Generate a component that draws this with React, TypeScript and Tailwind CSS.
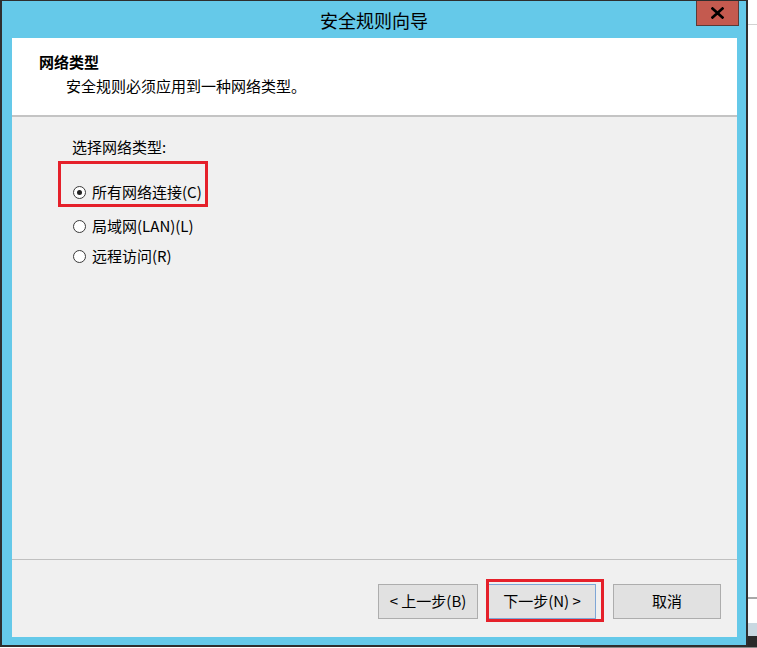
import React from 'react'

const font = "font-['Noto_Sans_CJK_SC','Microsoft_YaHei',sans-serif]"

function Radio({ label, checked }: { label: string; checked?: boolean }) {
  return (
    <div className="flex items-center h-[20px] w-fit">
      <span className="w-[13px] h-[13px] rounded-full border border-[#3a3a3a] bg-white flex items-center justify-center">
        {checked && <span className="w-[5px] h-[5px] rounded-full bg-[#222]" />}
      </span>
      <span className="ml-[6px] text-[15px] leading-[20px] text-black">{label}</span>
    </div>
  )
}

function Button({ children, active }: { children: React.ReactNode; active?: boolean }) {
  return (
    <button
      className={
        active
          ? 'h-[35px] w-[108px] border border-[#7fa6d6] bg-[#e3e3e3] text-[15px] text-black'
          : 'h-[35px] w-[108px] border border-[#adadad] bg-[#e1e1e1] text-[15px] text-black'
      }
    >
      {children}
    </button>
  )
}

export default function App() {
  return (
    <div className={`w-[757px] h-[648px] bg-white flex flex-col overflow-hidden ${font}`}>
      <div className="flex">
        {/* Dialog window */}
        <div className="w-[748px] h-[647px] flex flex-col bg-[#65c9e9] border-t border-x-2 border-b-2 border-[#2e2e2e]">
          {/* Title bar */}
          <div className="h-[37px] grid grid-cols-[1fr_auto_1fr] items-center">
            <div />
            <div className="text-[18px] leading-[24px] text-black">安全规则向导</div>
            <div className="justify-self-end self-start mr-[7px] w-[43px] h-[25px] bg-[#c45a4f] border border-[#5a3b38] border-t-0 flex items-center justify-center">
              <svg width="13" height="12" viewBox="0 0 13 12">
                <path d="M1.5 1.5 L11.5 10.5 M11.5 1.5 L1.5 10.5" stroke="#000" strokeWidth="2.6" strokeLinecap="square" />
              </svg>
            </div>
          </div>

          {/* Client area */}
          <div className="flex-1 ml-[10px] mr-[9px] mb-[8px] flex flex-col bg-[#f0f0f0]">
            {/* Header */}
            <div className="h-[77px] bg-white pt-[12px] pl-[27px]">
              <div className="text-[15px] leading-[24px] font-bold text-black">网络类型</div>
              <div className="pl-[27px] text-[15px] leading-[24px] text-black">安全规则必须应用到一种网络类型。</div>
            </div>
            <div className="h-[2px] bg-[#c4c4c4]" />

            {/* Body */}
            <div className="flex-1 pl-[60px] pt-[20px] flex flex-col">
              <div className="text-[15px] leading-[20px] text-black">选择网络类型:</div>
              <div className="relative mt-[25px] ml-[1px] w-fit">
                <Radio label="所有网络连接(C)" checked />
                <div className="absolute -left-[15px] -top-[21px] w-[150px] h-[46px] border-[3px] border-[#e5202a]" />
              </div>
              <div className="mt-[14px] ml-[1px]">
                <Radio label="局域网(LAN)(L)" />
              </div>
              <div className="mt-[10px] ml-[1px]">
                <Radio label="远程访问(R)" />
              </div>
            </div>

            <div className="h-[1px] bg-[#c0c0c0]" />

            {/* Footer */}
            <div className="h-[77px] flex justify-end items-start pt-[24px] pr-[16px]">
              <button className="h-[35px] w-[100px] border border-[#adadad] bg-[#e1e1e1] text-[15px] text-black">
                {'<'}&nbsp;上一步(B)
              </button>
              <div className="relative ml-[10px]">
                <Button active>下一步(N)&nbsp;{'>'}</Button>
                <div className="absolute -left-[2px] -top-[5px] -right-[8px] -bottom-[3px] border-[3px] border-[#e5202a]" />
              </div>
              <div className="ml-[17px]">
                <Button>取消</Button>
              </div>
            </div>
          </div>
        </div>

        {/* Desktop behind the dialog */}
        <div className="w-[9px] h-[647px] flex flex-col bg-white">
          <div className="h-[24px]" />
          <div className="h-[1px] bg-[#d2d2d2]" />
          <div className="flex-1" />
          <div className="h-[2px] bg-[#a8a8a8]" />
          <div className="h-[24px] bg-white" />
          <div className="h-[13px] bg-[#c9d8e1]" />
          <div className="h-[11px] bg-[#2a2a2a]" />
        </div>
      </div>
      <div className="h-[1px] flex">
        <div className="w-[580px] bg-white" />
        <div className="flex-1 bg-[#8a8a8a]" />
      </div>
    </div>
  )
}
